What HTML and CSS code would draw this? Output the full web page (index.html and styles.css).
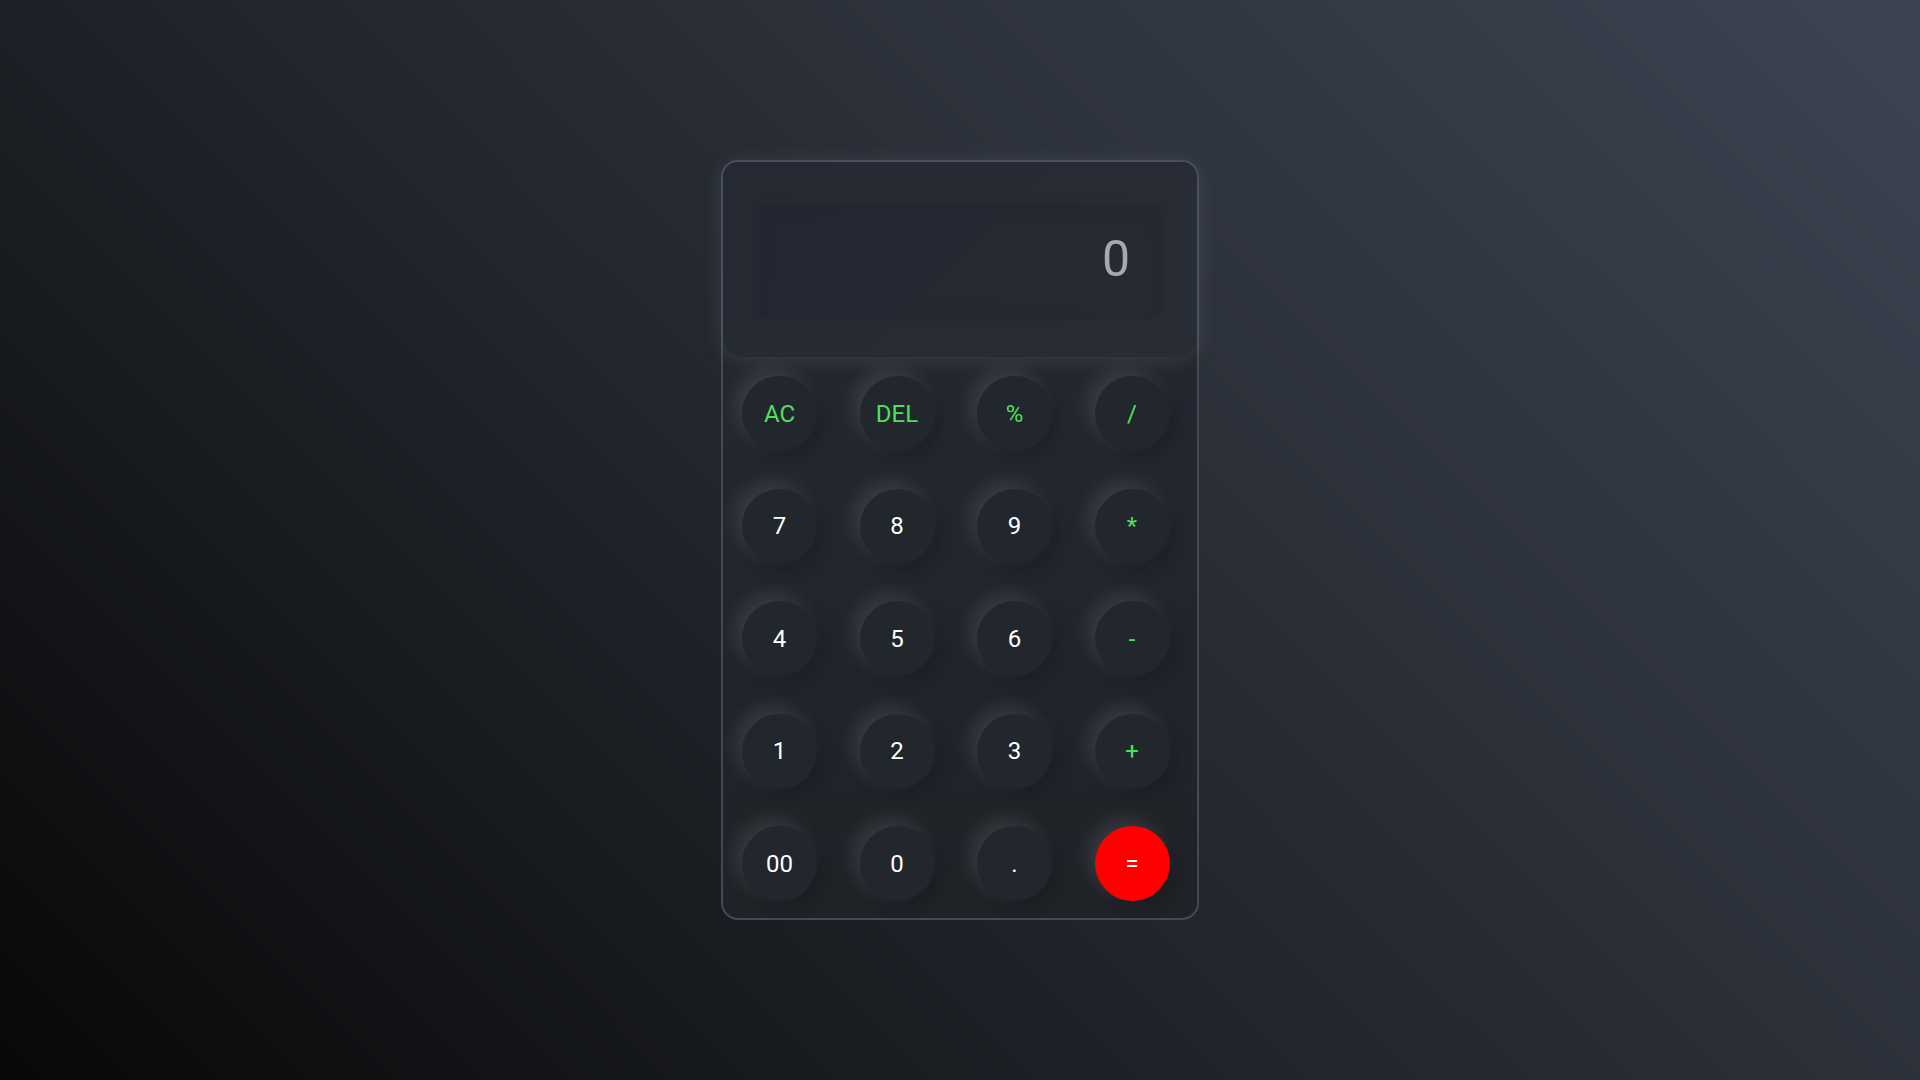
FILE: index.html
```html
<!DOCTYPE html>
<html lang="en">
<head>
<meta charset="utf-8">
<title>Calculator</title>
<link rel="stylesheet" href="styles.css">
</head>
<body>
<div class="calculator">
  <div class="display">
    <div class="screen">0</div>
  </div>
  <div class="keys">
    <button class="key op">AC</button>
    <button class="key op">DEL</button>
    <button class="key op">%</button>
    <button class="key op">/</button>
    <button class="key">7</button>
    <button class="key">8</button>
    <button class="key">9</button>
    <button class="key op">*</button>
    <button class="key">4</button>
    <button class="key">5</button>
    <button class="key">6</button>
    <button class="key op">-</button>
    <button class="key">1</button>
    <button class="key">2</button>
    <button class="key">3</button>
    <button class="key op">+</button>
    <button class="key">00</button>
    <button class="key">0</button>
    <button class="key">.</button>
    <button class="key equal">=</button>
  </div>
</div>
</body>
</html>
```
FILE: styles.css
```css
* { box-sizing: border-box; }
html, body { margin: 0; height: 100%; }
body {
  display: flex;
  align-items: center;
  justify-content: center;
  background: linear-gradient(45deg, #080808 0%, #1e2228 38%, #2b3039 62%, #3c4452 100%);
  font-family: Roboto, "Liberation Sans", sans-serif;
}
.calculator {
  width: 478px;
  height: 760px;
  border: 2px solid #434956;
  border-radius: 17px;
  background: linear-gradient(180deg, #242830 0%, #22262d 50%, #1f2227 100%);
  display: flex;
  flex-direction: column;
}
.display {
  height: 195px;
  padding: 43px 36px 39px 36px;
  border-radius: 15px 15px 20px 20px;
  background: linear-gradient(135deg, #242932 0%, #282d36 100%);
  box-shadow: 0 2px 20px rgba(170, 178, 195, 0.18);
  display: flex;
}
.screen {
  flex: 1;
  display: flex;
  align-items: center;
  justify-content: flex-end;
  padding: 0 31px 6px 0;
  font-size: 50px;
  font-weight: 400;
  color: #a6a9ad;
  background: rgba(20, 22, 27, 0.06);
  box-shadow: inset 0 0 24px rgba(0, 0, 0, 0.06), 0 0 14px rgba(0, 0, 0, 0.05);
}
.keys {
  display: grid;
  grid-template-columns: repeat(4, 75px);
  grid-auto-rows: 75px;
  column-gap: 42.5px;
  row-gap: 37.5px;
  padding: 19px 27px 17px 19px;
}
.key {
  width: 75px;
  height: 75px;
  border: none;
  border-radius: 50%;
  background: #22262d;
  color: #ffffff;
  font-family: Roboto, "Liberation Sans", sans-serif;
  font-size: 24px;
  padding: 0;
  box-shadow: -7px -7px 18px rgba(255, 255, 255, 0.11), 6px 6px 16px rgba(0, 0, 0, 0.18);
}
.key.op { color: #4fe05a; }
.key.equal { background: #ff0000; color: #ffffff; }
```
